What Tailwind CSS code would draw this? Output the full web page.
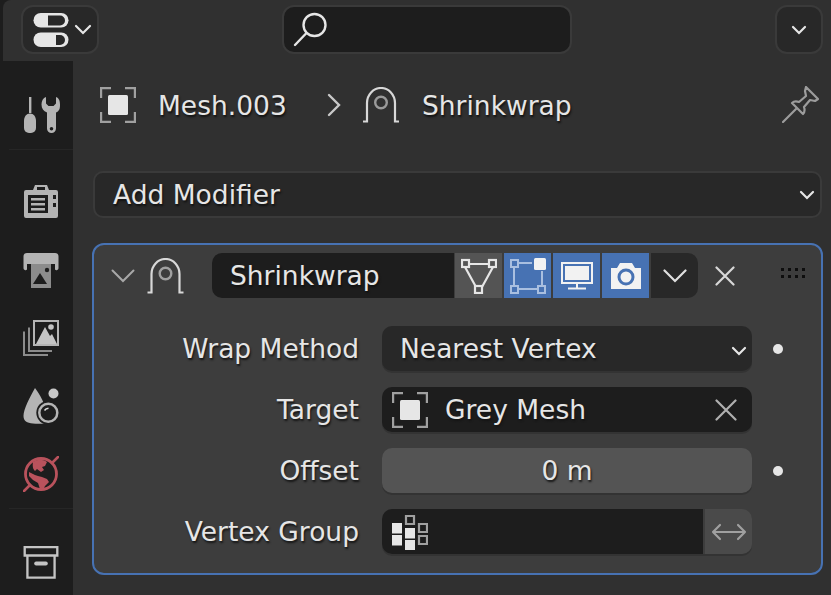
<!DOCTYPE html>
<html lang="en">
  <head>
    <meta charset="UTF-8" />
    <title>Modifier Properties</title>
    <script src="https://cdn.jsdelivr.net/npm/@tailwindcss/browser@4"></script>
  </head>
  <body class="w-[831px] h-[595px] overflow-hidden bg-[#1d1d1d] font-['DejaVu_Sans',sans-serif] text-[26.5px] leading-none text-[#e6e6e6]">
    <div class="h-full pl-[3px] flex flex-col">
      <!-- header -->
      <header class="h-[61px] shrink-0 bg-[#303030] rounded-tl-[8px] flex items-start pt-[5px] pl-[18px] pr-[8px]">
        <button class="w-[78px] h-[49px] rounded-[12px] bg-[#282828] border-2 border-[#3a3a3a] flex items-center pl-[10px] gap-[5px]">
          <svg width="36" height="36" viewBox="0 0 36 36">
            <rect x="0.500" y="1" width="35" height="14.500" rx="7.250" fill="#e6e6e6" />
            <path d="M15 3.500h12a5 5 0 0 1 0 10H15z" fill="#282828" />
            <rect x="0.500" y="20.500" width="35" height="14.500" rx="7.250" fill="#e6e6e6" />
            <path d="M23 23h4a5 5 0 0 1 0 10h-4z" fill="#282828" />
          </svg>
          <svg width="18" height="11" viewBox="0 0 18 11"><path d="M2 2l7 7 7-7" fill="none" stroke="#e6e6e6" stroke-width="2.200" stroke-linecap="round" /></svg>
        </button>
        <div class="ml-[183px] w-[290px] h-[49px] rounded-[12px] bg-[#1d1d1d] border-2 border-[#3a3a3a] flex items-center pl-[9px]">
          <svg width="36" height="36" viewBox="0 0 36 36" fill="none" stroke="#e6e6e6" stroke-width="2.400" stroke-linecap="round">
            <circle cx="21.500" cy="13" r="11" />
            <path d="M13.500 21 2 33" />
          </svg>
        </div>
        <button class="ml-auto w-[48px] h-[49px] rounded-[12px] bg-[#282828] border-2 border-[#3a3a3a] flex items-center justify-center">
          <svg width="16" height="10" viewBox="0 0 16 10"><path d="M2 2l6 6 6-6" fill="none" stroke="#e6e6e6" stroke-width="2.200" stroke-linecap="round" /></svg>
        </button>
      </header>

      <div class="flex-1 flex min-h-0">
        <!-- tabs -->
        <nav class="w-[70px] shrink-0 flex flex-col items-center pl-[6px]">
          <div class="h-[89px] w-full flex justify-center pt-[36px] border-b border-[#262626]">
            <svg width="37" height="36" viewBox="0 0 37 36" fill="#b4b4b4">
              <path d="M6 0h2.400v16H6z" />
              <path d="M1 24c0-4.500 2.500-7.500 6-7.500s6 3 6 7.500v7a5 5 0 0 1-5 5H6a5 5 0 0 1-5-5z" />
              <path fill-rule="evenodd" d="M23 0c-3 1-4.500 4-4.500 7.500 0 4 2 6.500 5.500 8v16a4.500 4.500 0 0 0 9 0v-16c3.500-1.500 4-4 4-8 0-3.500-1-6.500-4-7.500v6.500l-2.500 2.500h-5L23 6.500zM28.500 30a1.800 1.800 0 1 0 0 3.600 1.800 1.800 0 0 0 0-3.600z" />
            </svg>
          </div>
          <div class="flex flex-col items-center gap-[32px] pt-[34px]">
            <svg width="36" height="36" viewBox="0 2 36 36" fill="#b4b4b4">
              <path fill-rule="evenodd" d="M3 8h7l2-5h12l2 5h7a2 2 0 0 1 2 2v24a2 2 0 0 1-2 2H3a2 2 0 0 1-2-2V10a2 2 0 0 1 2-2zM5 13v18h20V13zM30 13v4h3v-4zM30 21v4h3v-4zM14 5v3h8V5z" />
              <path d="M8 16h14v2.500H8zM8 21h14v2.500H8zM8 26h14v2.500H8z" />
            </svg>
            <svg width="36" height="36" viewBox="0 0 36 36">
              <path d="M4 1h28a3.500 3.500 0 0 1 3.500 3.500V16a2 2 0 0 1-3.500 1.500V12H4v5.500A2 2 0 0 1 .5 16V4.500A3.500 3.500 0 0 1 4 1z" fill="#b4b4b4" />
              <path d="M8 12h20v24H8z" fill="#8c8c8c" />
              <path d="M10 32l7-11 7 11z" fill="#1d1d1d" />
              <circle cx="24" cy="18" r="2.200" fill="#1d1d1d" />
            </svg>
            <svg width="36" height="36" viewBox="0 0 36 36" fill="none">
              <path d="M11 1h24v24H11z" stroke="#b4b4b4" stroke-width="2" />
              <path d="M13 24 22 7l5 9 2-2 5 10z" fill="#c4c4c4" />
              <circle cx="28" cy="7" r="2.800" fill="#c4c4c4" />
              <path d="M6 7.500v23.500h23M1 11.500V35h24" stroke="#8c8c8c" stroke-width="2" />
            </svg>
            <svg width="36" height="36" viewBox="0 0 36 36">
              <path d="M12 0c4 5 7 11 9 16l2 19c-4 1-9 1-13 .5C4 35 .5 33 .5 28 .5 21 7 9 12 0z" fill="#b4b4b4" />
              <circle cx="25.300" cy="24.700" r="12" fill="#1d1d1d" />
              <circle cx="30.500" cy="5.500" r="5" fill="#c8c8c8" />
              <circle cx="25.300" cy="24.700" r="9" fill="none" stroke="#b4b4b4" stroke-width="2.500" />
              <path d="M21.500 22.500a5 5 0 0 1 4-2.300" fill="none" stroke="#d8d8d8" stroke-width="1.500" />
            </svg>
            <svg width="36" height="36" viewBox="0 0 36 36" fill="none">
              <circle cx="18" cy="18" r="15.500" stroke="#b9525c" stroke-width="2.800" />
              <path d="M1 35 7 29M29 7l6-6" stroke="#b9525c" stroke-width="2.600" stroke-linecap="round" />
              <path d="M10 6c4-3 10-3 14 0l-2 4-3 1 2 3-3 2-4-3-2 2c-1-1-3-3-2-9zM6 16l6 3 3 1 4 1 5 2 2 3-4 4-2 4-3-1-2-6-5-3-4-4z" fill="#b9525c" />
            </svg>
          </div>
          <div class="w-full mt-[16px] pt-[37px] flex justify-center border-t border-[#262626]">
            <svg width="36" height="33" viewBox="0 0 36 34" fill="none" stroke="#c4c4c4" stroke-width="2.400">
              <path d="M1.200 1.200h33.600v8.600H1.200z" />
              <path d="M4 10v22.500h28V10" />
              <path d="M13 18h10" stroke-width="4" stroke-linecap="round" />
            </svg>
          </div>
        </nav>

        <!-- properties editor -->
        <main class="flex-1 min-w-0 bg-[#303030] pl-[20px] pr-[9px]">
          <div class="h-[88px] flex items-center text-[#e6e6e6] [text-shadow:1px_2px_2px_#111]">
            <svg class="ml-[7px]" width="36" height="36" viewBox="0 0 36 36" fill="none">
              <path d="M1 11V1h10M25 1h10v10M35 25v10H25M11 35H1V25" stroke="#a0a0a0" stroke-width="2.400" />
              <rect x="8" y="8" width="20" height="20" rx="1.500" fill="#e6e6e6" />
            </svg>
            <span class="ml-[22px] w-[142px] pt-[2px]">Mesh.003</span>
            <svg class="ml-[27px]" width="15" height="24" viewBox="0 0 15 24"><path d="M2 2l10 10L2 22" fill="none" stroke="#c8c8c8" stroke-width="2.400" stroke-linecap="round" /></svg>
            <svg class="ml-[21px]" width="36" height="36" viewBox="0 0 36 36" fill="none">
              <path d="M0 34.500h4V16a14 15 0 0 1 28 0v18.500h4" stroke="#d8d8d8" stroke-width="2.200" />
              <circle cx="18" cy="15.500" r="5.800" stroke="#9a9a9a" stroke-width="2.400" />
            </svg>
            <span class="ml-[23px] pt-[2px]">Shrinkwrap</span>
            <svg class="ml-auto mr-[3px] mb-[1px]" width="37" height="37" viewBox="0 0 37 37" fill="none" stroke="#9c9c9c" stroke-width="2.200" stroke-linecap="round" stroke-linejoin="round">
              <path d="M24 1l12 12-3 2-5-1-6 7c1 3 1 5-1 7L10 17c2-2 4-2 7-1l7-6-1-5z" />
              <path d="M14 23 1 36" />
            </svg>
          </div>

          <!-- add modifier -->
          <button class="mt-[22px] w-full h-[47px] rounded-[10px] bg-[#282828] border-2 border-[#3a3a3a] flex items-center pl-[18px] pr-[5px] [text-shadow:1px_2px_2px_#111]">
            <span class="pt-[2px]">Add Modifier</span>
            <svg class="ml-auto" width="16" height="10" viewBox="0 0 16 10"><path d="M2 2l6 6 6-6" fill="none" stroke="#e6e6e6" stroke-width="2.200" stroke-linecap="round" /></svg>
          </button>

          <!-- modifier panel -->
          <section class="mt-[25px] -mx-px h-[332px] rounded-[12px] bg-[#3d3d3d] border-2 border-[#4772b3] pt-[8px] pl-[17px]">
            <div class="h-[45px] flex items-center">
              <svg width="24" height="14" viewBox="0 0 24 14"><path d="M1.500 1.500 12 12 22.500 1.500" fill="none" stroke="#a8a8a8" stroke-width="2" stroke-linecap="round" /></svg>
              <svg class="ml-[12px]" width="37" height="36" viewBox="0 0 36 36" fill="none">
                <path d="M0 34.500h4V16a14 15 0 0 1 28 0v18.500h4" stroke="#d8d8d8" stroke-width="2.200" />
                <circle cx="18" cy="15.500" r="5.800" stroke="#a0a0a0" stroke-width="2.400" />
              </svg>
              <div class="ml-[28px] w-[242px] h-[45px] rounded-l-[10px] bg-[#1d1d1d] flex items-center pl-[18px] pt-[2px] [text-shadow:1px_2px_2px_#111]">Shrinkwrap</div>
              <div class="ml-px w-[47px] h-[45px] bg-[#545454] flex items-center justify-center">
                <svg width="36" height="36" viewBox="0 0 36 36" fill="none" stroke="#e6e6e6" stroke-width="2.200">
                  <path d="M6 6h24M4 9l11 20M32 9 21 29" />
                  <rect x="1" y="2" width="7" height="7" fill="#545454" />
                  <rect x="28" y="2" width="7" height="7" fill="#545454" />
                  <rect x="14" y="28" width="7" height="7" fill="#545454" />
                </svg>
              </div>
              <div class="ml-[2px] w-[47px] h-[45px] bg-[#4772b3] flex items-center justify-center">
                <svg width="36" height="36" viewBox="0 0 36 36" fill="none" stroke="#a9bfe0" stroke-width="2">
                  <path d="M8 5h14M4 9v18M8 31h20M32 13v14" />
                  <rect x="1" y="2" width="7" height="7" />
                  <rect x="1" y="28" width="7" height="7" />
                  <rect x="28" y="28" width="7" height="7" />
                  <rect x="24" y="0" width="12" height="12" rx="1.500" fill="#f2f2f2" stroke="none" />
                </svg>
              </div>
              <div class="ml-[2px] w-[47px] h-[45px] bg-[#4772b3] flex items-center justify-center">
                <svg width="32" height="28" viewBox="0 0 32 28" fill="none">
                  <path d="M1 1h30v20H1z" stroke="#f2f2f2" stroke-width="2" />
                  <path d="M4 4h24v14H4z" fill="#f2f2f2" />
                  <path d="M16 22v4M7 26.500h18" stroke="#f2f2f2" stroke-width="2" />
                </svg>
              </div>
              <div class="ml-[2px] w-[47px] h-[45px] bg-[#4772b3] flex items-center justify-center">
                <svg width="32" height="28" viewBox="0 0 32 28">
                  <path d="M1 6h6l3-5h12l3 5h6v21H1z" fill="#f2f2f2" />
                  <circle cx="16" cy="15" r="7" fill="none" stroke="#4772b3" stroke-width="3" />
                </svg>
              </div>
              <div class="ml-[2px] w-[47px] h-[45px] rounded-r-[10px] bg-[#282828] flex items-center justify-center">
                <svg width="24" height="14" viewBox="0 0 24 14"><path d="M1.500 1.500 12 12 22.500 1.500" fill="none" stroke="#e0e0e0" stroke-width="2.200" stroke-linecap="round" /></svg>
              </div>
              <svg class="ml-[17px]" width="20" height="20" viewBox="0 0 20 20"><path d="M1.500 1.500l17 17M18.500 1.500l-17 17" fill="none" stroke="#d8d8d8" stroke-width="2.200" stroke-linecap="round" /></svg>
              <svg class="ml-[46px] mb-[5px]" width="24" height="12" viewBox="0 0 24 12" fill="#0e0e0e">
                <path d="M0 1h3v3H0zM7 1h3v3H7zM14 1h3v3h-3zM21 1h3v3h-3zM0 8h3v3H0zM7 8h3v3H7zM14 8h3v3h-3zM21 8h3v3h-3z" />
              </svg>
            </div>

            <div class="mt-[28px] flex flex-col gap-[16px] [text-shadow:1px_2px_2px_#151515]">
              <div class="flex items-center h-[45px]">
                <label class="w-[248px] pt-[2px] text-right text-[#e6e6e6]">Wrap Method</label>
                <div class="ml-[23px] w-[370px] h-[45px] rounded-[10px] bg-[#282828] shadow-[0_2px_0_#333333] flex items-center pl-[18px] pr-[5px]">
                  <span class="pt-[2px]">Nearest Vertex</span>
                  <svg class="ml-auto mt-[4px]" width="16" height="10" viewBox="0 0 16 10"><path d="M2 2l6 6 6-6" fill="none" stroke="#e6e6e6" stroke-width="2.200" stroke-linecap="round" /></svg>
                </div>
                <span class="ml-[21px] w-[10px] h-[10px] rounded-full bg-[#e6e6e6]"></span>
              </div>
              <div class="flex items-center h-[45px]">
                <label class="w-[248px] pt-[2px] text-right">Target</label>
                <div class="ml-[23px] w-[370px] h-[45px] rounded-[10px] bg-[#1d1d1d] shadow-[0_2px_0_#333333] flex items-center pl-[10px] pr-[15px]">
                  <svg width="36" height="36" viewBox="0 0 36 36" fill="none">
                    <path d="M1 11V1h10M25 1h10v10M35 25v10H25M11 35H1V25" stroke="#a0a0a0" stroke-width="2.400" />
                    <rect x="8" y="8" width="20" height="20" rx="1.500" fill="#e6e6e6" />
                  </svg>
                  <span class="ml-[17px] pt-[2px]">Grey Mesh</span>
                  <svg class="ml-auto" width="22" height="22" viewBox="0 0 22 22"><path d="M1.500 1.500l19 19M20.500 1.500l-19 19" fill="none" stroke="#b0b0b0" stroke-width="2.200" stroke-linecap="round" /></svg>
                </div>
              </div>
              <div class="flex items-center h-[45px]">
                <label class="w-[248px] pt-[2px] text-right">Offset</label>
                <div class="ml-[23px] w-[370px] h-[45px] rounded-[10px] bg-[#545454] shadow-[0_2px_0_#333333] flex items-center justify-center pt-[2px]">0 m</div>
                <span class="ml-[21px] w-[10px] h-[10px] rounded-full bg-[#e6e6e6]"></span>
              </div>
              <div class="flex items-center h-[45px]">
                <label class="w-[248px] pt-[2px] text-right">Vertex Group</label>
                <div class="ml-[23px] w-[370px] h-[45px] flex shadow-[0_2px_0_#333333] rounded-[10px]">
                  <div class="flex-1 rounded-l-[10px] bg-[#1d1d1d] flex items-center pl-[10px]">
                    <svg width="36" height="36" viewBox="0 0 36 36">
                      <path d="M0 9h10v10.500H0zM0 21h10v10.500H0zM13 14h10v10.500H13zM13 26h10v10H13z" fill="#e6e6e6" />
                      <path d="M14 2h8v8h-8zM27 10h8v8h-8zM27 22h8v8h-8z" fill="none" stroke="#a0a0a0" stroke-width="2.200" />
                    </svg>
                  </div>
                  <div class="ml-[2px] w-[47px] rounded-r-[10px] bg-[#4a4a4a] flex items-center justify-center">
                    <svg width="36" height="18" viewBox="0 0 36 18"><path d="M9 2 2 9l7 7M27 2l7 7-7 7M2 9h32" fill="none" stroke="#a0a0a0" stroke-width="2.200" stroke-linecap="round" stroke-linejoin="round" /></svg>
                  </div>
                </div>
              </div>
            </div>
          </section>
        </main>
      </div>
    </div>
  </body>
</html>
